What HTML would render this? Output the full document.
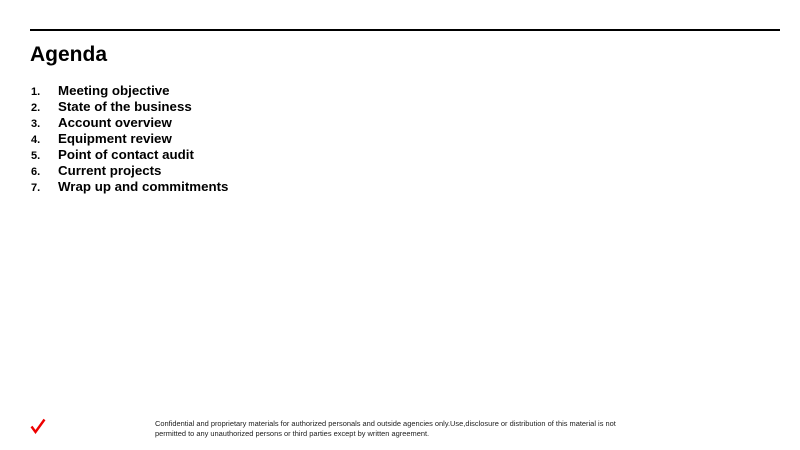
<!DOCTYPE html>
<html><head><style>
body{margin:0;width:800px;height:450px;background:#fff;position:relative;font-family:"Liberation Sans",Arial,sans-serif;color:#000;overflow:hidden}
.line{position:absolute;left:30px;top:29px;width:750px;height:2px;background:#000}
h1{position:absolute;left:30px;top:42px;margin:0;font-size:21px;font-weight:bold;line-height:26px}
.item{position:absolute;left:31px;font-weight:bold;font-size:13.3px;line-height:16px;white-space:nowrap}
.item span{display:inline-block;width:27px;font-size:11px}
.foot{position:absolute;left:155px;top:419px;font-size:7.45px;line-height:10px;color:#222}
svg{position:absolute;left:30px;top:418px}
</style></head><body>
<div class="line"></div>
<h1>Agenda</h1>
<div class="item" style="top:83px"><span>1.</span>Meeting objective</div>
<div class="item" style="top:99px"><span>2.</span>State of the business</div>
<div class="item" style="top:115px"><span>3.</span>Account overview</div>
<div class="item" style="top:131px"><span>4.</span>Equipment review</div>
<div class="item" style="top:147px"><span>5.</span>Point of contact audit</div>
<div class="item" style="top:163px"><span>6.</span>Current projects</div>
<div class="item" style="top:179px"><span>7.</span>Wrap up and commitments</div>
<svg width="16" height="16" viewBox="0 0 16 16"><path d="M1.5 8.5 L5.5 14 L14.5 1.5" fill="none" stroke="#e00" stroke-width="2.4"/></svg>
<div class="foot">Confidential and proprietary materials for authorized personals and outside agencies only.Use,disclosure or distribution of this material is not<br>permitted to any unauthorized persons or third parties except by written agreement.</div>
</body></html>
